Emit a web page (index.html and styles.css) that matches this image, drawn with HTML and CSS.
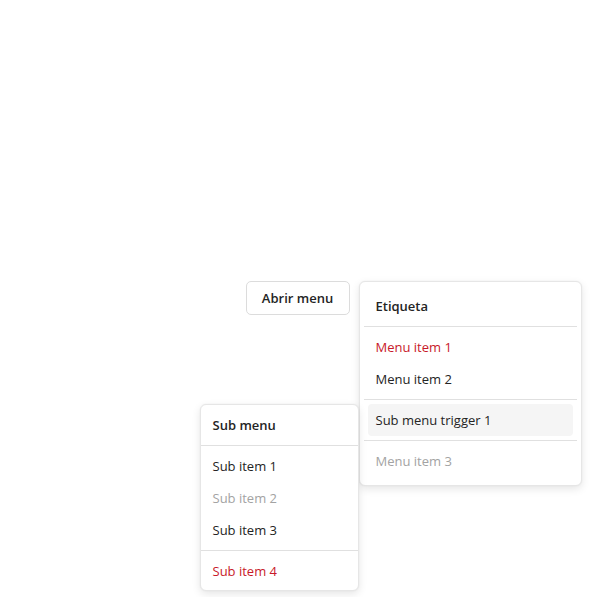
FILE: index.html
```html
<!DOCTYPE html>
<html lang="es">
<head>
<meta charset="utf-8">
<title>Menu</title>
<link rel="stylesheet" href="styles.css">
</head>
<body>
<div class="stage">
  <div class="anchor">
    <button class="trigger-btn" type="button">Abrir menu</button>
    <div class="menu menu-main">
      <div class="menu-label">Etiqueta</div>
      <div class="divider"></div>
      <div class="item item-danger">Menu item 1</div>
      <div class="item">Menu item 2</div>
      <div class="divider"></div>
      <div class="item item-active">
        Sub menu trigger 1
        <div class="menu menu-sub">
          <div class="menu-label">Sub menu</div>
          <div class="divider"></div>
          <div class="item">Sub item 1</div>
          <div class="item item-disabled">Sub item 2</div>
          <div class="item">Sub item 3</div>
          <div class="divider"></div>
          <div class="item item-danger">Sub item 4</div>
        </div>
      </div>
      <div class="divider"></div>
      <div class="item item-disabled">Menu item 3</div>
    </div>
  </div>
</div>
</body>
</html>
```

FILE: styles.css
```css
html, body {
  margin: 0;
  padding: 0;
  background: #ffffff;
}

body {
  font-family: "Open Sans", "Noto Sans", "Liberation Sans", sans-serif;
  font-size: 13px;
  color: #242424;
}

.stage {
  box-sizing: border-box;
  height: 100vh;
  padding: 0 0 2px 0;
  display: flex;
  align-items: center;
  justify-content: center;
}

.anchor {
  position: relative;
}

.trigger-btn {
  box-sizing: border-box;
  width: 104px;
  height: 34px;
  padding: 0 12px;
  border: 1px solid #dcdcdc;
  border-radius: 5px;
  background: #ffffff;
  font-family: inherit;
  font-size: 13px;
  font-weight: 600;
  color: #242424;
  display: flex;
  align-items: center;
  justify-content: center;
}

.menu {
  position: absolute;
  box-sizing: border-box;
  background: #ffffff;
  border: 1px solid #e6e6e6;
  border-radius: 6px;
  box-shadow: 0 0 2px rgba(0, 0, 0, 0.06), 0 3px 8px rgba(0, 0, 0, 0.1);
  line-height: 20px;
}

.menu-main {
  top: 0;
  left: calc(100% + 9px);
  width: 223px;
  padding: 4px 4px 8px;
}

.menu-sub {
  top: 0;
  right: calc(100% + 9px);
  width: 159px;
  padding: 0 0 3px;
  color: #242424;
}

.menu-label {
  height: 36px;
  box-sizing: border-box;
  padding: 10px 12px 6px;
  font-weight: 600;
}

.divider {
  height: 1px;
  margin: 4px 0;
  background: #e0e0e0;
}

.item {
  height: 32px;
  line-height: 32px;
  margin: 0 4px;
  padding: 0 8px;
  border-radius: 4px;
  white-space: nowrap;
}

.menu-sub .item {
  margin: 0;
  padding: 0 12px;
}

.item-active {
  position: relative;
  background: #f5f5f5;
}

.item-danger {
  color: #c8192a;
}

.item-disabled {
  color: #a3a3a3;
}
```
